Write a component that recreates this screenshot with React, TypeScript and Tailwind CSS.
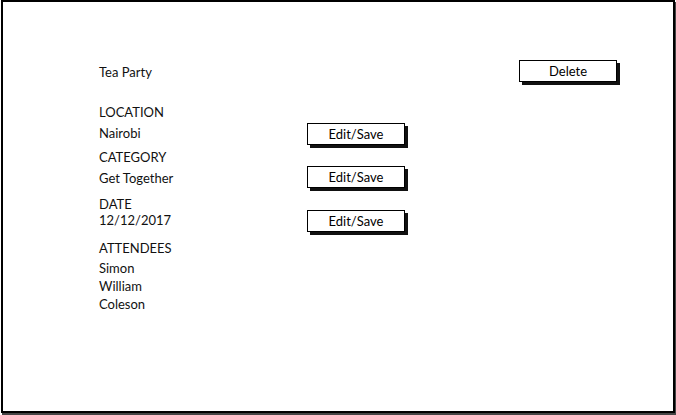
import React from 'react';

function SketchButton({ label }: { label: string }) {
  return (
    <button className="h-[22px] w-[98px] border-[1.5px] border-black bg-white text-[13px] leading-none text-black shadow-[3px_3px_0_#111]">
      {label}
    </button>
  );
}

function Line({ children, className = '' }: { children: React.ReactNode; className?: string }) {
  return <div className={`h-[16px] leading-[16px] ${className}`}>{children}</div>;
}

export default function App() {
  const attendees = ['Simon', 'William', 'Coleson'];

  return (
    <div className="h-[415px] w-[676px] bg-white pl-[1px] text-[13px] text-[#111] [font-family:Lato,'Liberation_Sans',sans-serif]">
      <div className="h-[413px] w-[674px] border-2 border-black shadow-[1px_2px_0_#444]">
        {/* Header */}
        <div className="mt-[58px] flex h-[22px] items-center pl-[96px]">
          <span className="mt-[3px]">Tea Party</span>
          <div className="ml-auto mr-[56px]">
            <SketchButton label="Delete" />
          </div>
        </div>

        <div className="pl-[96px]">
          <Line className="mt-[22px]">LOCATION</Line>
          <div className="mt-[3px] grid h-[22px] grid-cols-[208px_98px] items-center">
            <span>Nairobi</span>
            <SketchButton label="Edit/Save" />
          </div>

          <Line className="mt-[4px]">CATEGORY</Line>
          <div className="mt-[1px] grid h-[22px] grid-cols-[208px_98px] items-center">
            <span className="mt-[3px]">Get Together</span>
            <SketchButton label="Edit/Save" />
          </div>

          <Line className="mt-[8px]">DATE</Line>
          <div className="-mt-[2px] grid h-[22px] grid-cols-[208px_98px] items-center">
            <span>12/12/2017</span>
            <SketchButton label="Edit/Save" />
          </div>

          <Line className="mt-[8px]">ATTENDEES</Line>
          <div className="mt-[3px]">
            {attendees.map(name => (
              <div key={name} className="h-[18px] leading-[18px]">{name}</div>
            ))}
          </div>
        </div>
      </div>
    </div>
  );
}
